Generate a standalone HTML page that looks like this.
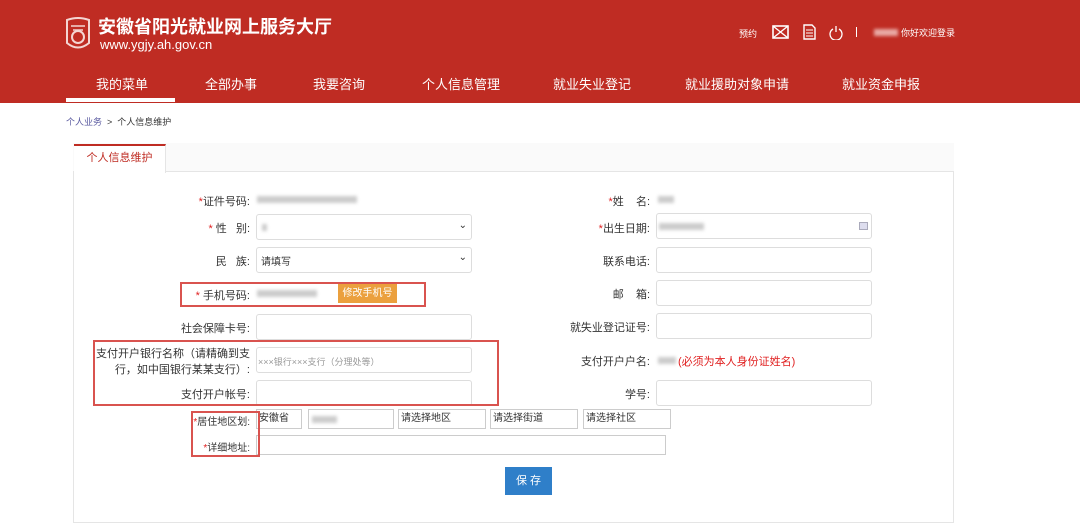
<!DOCTYPE html>
<html><head><meta charset="utf-8"><style>
*{margin:0;padding:0;box-sizing:border-box}
body{width:1080px;height:508px;overflow:hidden;background:#fff;font-family:"Liberation Sans","Noto Sans CJK SC",sans-serif;font-size:11px;color:#333;position:relative}
.a{position:absolute}
.hd{left:0;top:0;width:1080px;height:103px;background:#bf2c23}
.nav{color:#fff;font-size:13px;top:74px}
.lbl{text-align:right;white-space:nowrap}
.r{color:#e02020}
.in{border:1px solid #ddd;border-radius:3px;background:#fff;height:26px}
.sel{border:1px solid #ccc;height:20px;background:#fff;padding-left:2px;line-height:18px;font-size:10px}
.box{border:2px solid #d9534f}
.blur{background:#ccc;filter:blur(1.5px);height:7px}
</style></head><body>
<div class="a hd"></div>
<svg class="a" style="left:64px;top:16px" width="28" height="36" viewBox="0 0 28 36"><path d="M3 4 Q14 0 25 4 L25 27 Q14 36 3 27Z" fill="none" stroke="#f4d5d2" stroke-width="2"/><circle cx="14" cy="21" r="6" fill="none" stroke="#f4d5d2" stroke-width="2"/><path d="M7 10H21M9 14H19" stroke="#f4d5d2" stroke-width="1.5"/></svg>
<div class="a" style="left:98px;top:13px;color:#fff;font-size:18px;font-weight:bold">安徽省阳光就业网上服务大厅</div>
<div class="a" style="left:100px;top:37px;color:#fff;font-size:13px">www.ygjy.ah.gov.cn</div>
<div class="a" style="left:739px;top:27px;color:#fff;font-size:9px">预约</div>
<svg class="a" style="left:772px;top:25px" width="17" height="14"><rect x="1" y="1" width="15" height="12" fill="none" stroke="#fff" stroke-width="1.6"/><path d="M1 1L16 13M16 1L1 13" stroke="#fff" stroke-width="1.4"/></svg>
<svg class="a" style="left:803px;top:24px" width="13" height="16"><path d="M1 1H9L12 4V15H1Z" fill="none" stroke="#fff" stroke-width="1.4"/><path d="M3 6H10M3 9H10M3 12H10" stroke="#fff"/></svg>
<svg class="a" style="left:829px;top:25px" width="14" height="15"><path d="M4 4A6 6 0 1 0 10 4" fill="none" stroke="#fff" stroke-width="1.3"/><path d="M7 1V7" stroke="#fff" stroke-width="1.3"/></svg>
<div class="a" style="left:856px;top:27px;width:1px;height:10px;background:#fff"></div>
<div class="a blur" style="left:874px;top:29px;width:24px;background:#e9a9a4"></div>
<div class="a" style="left:901px;top:26px;color:#fff;font-size:9px">你好欢迎登录</div>
<div class="a nav" style="left:96px">我的菜单</div>
<div class="a nav" style="left:205px">全部办事</div>
<div class="a nav" style="left:313px">我要咨询</div>
<div class="a nav" style="left:422px">个人信息管理</div>
<div class="a nav" style="left:553px">就业失业登记</div>
<div class="a nav" style="left:685px">就业援助对象申请</div>
<div class="a nav" style="left:842px">就业资金申报</div>
<div class="a" style="left:66px;top:98px;width:109px;height:4px;background:#fff"></div>
<div class="a" style="left:66px;top:115px;font-size:9px"><span style="color:#5a5aa0">个人业务</span> &nbsp;&gt;&nbsp; 个人信息维护</div>
<div class="a" style="left:73px;top:143px;width:881px;height:380px;border:1px solid #e5e5e5"></div>
<div class="a" style="left:73px;top:143px;width:881px;height:29px;border-bottom:1px solid #e5e5e5;background:#fafafa"></div>
<div class="a" style="left:74px;top:144px;width:92px;height:29px;background:#fff;border-top:2px solid #bf2c23;border-right:1px solid #e5e5e5;color:#bf2c23;font-size:11px;text-align:center;line-height:25px">个人信息维护</div>

<div class="a lbl" style="right:830px;top:193px"><span class="r">*</span>证件号码:</div>
<div class="a blur" style="left:257px;top:196px;width:100px"></div>
<div class="a lbl" style="right:830px;top:220px"><span class="r">*</span> 性 &nbsp; 别:</div>
<div class="a in" style="left:256px;top:214px;width:216px"><div class="a blur" style="left:5px;top:9px;width:5px"></div><span class="a" style="right:4px;top:5px;font-size:10px">⌄</span></div>
<div class="a lbl" style="right:830px;top:253px">民 &nbsp; 族:</div>
<div class="a in" style="left:256px;top:247px;width:216px;padding:5px 4px;font-size:10px">请填写<span class="a" style="right:4px;top:4px">⌄</span></div>
<div class="a lbl" style="right:830px;top:287px"><span class="r">*</span> 手机号码:</div>
<div class="a blur" style="left:257px;top:290px;width:60px"></div>
<div class="a" style="left:338px;top:284px;width:59px;height:19px;background:#eba03e;color:#fff;font-size:10px;line-height:19px;text-align:center">修改手机号</div>
<div class="a lbl" style="right:830px;top:320px">社会保障卡号:</div>
<div class="a in" style="left:256px;top:314px;width:216px"></div>
<div class="a lbl" style="right:830px;top:346px;line-height:16px">支付开户银行名称（请精确到支<br>行，如中国银行某某支行）:</div>
<div class="a in" style="left:256px;top:347px;width:216px;padding:7px 1px;font-size:9px;color:#999">×××银行×××支行（分理处等）</div>
<div class="a lbl" style="right:830px;top:386px">支付开户帐号:</div>
<div class="a in" style="left:256px;top:380px;width:216px"></div>
<div class="a lbl" style="right:830px;top:413px;font-size:10px"><span class="r">*</span>居住地区划:</div>
<div class="a sel" style="left:256px;top:409px;width:46px">安徽省</div>
<div class="a sel" style="left:308px;top:409px;width:86px"><div class="a blur" style="left:3px;top:6px;width:25px"></div></div>
<div class="a sel" style="left:398px;top:409px;width:88px">请选择地区</div>
<div class="a sel" style="left:490px;top:409px;width:88px">请选择街道</div>
<div class="a sel" style="left:583px;top:409px;width:88px">请选择社区</div>
<div class="a lbl" style="right:830px;top:439px;font-size:10px"><span class="r">*</span>详细地址:</div>
<div class="a sel" style="left:256px;top:435px;width:410px"></div>
<div class="a" style="left:505px;top:467px;width:47px;height:28px;background:#2f7fc9;color:#fff;font-size:11px;text-align:center;line-height:28px">保 存</div>

<div class="a lbl" style="right:430px;top:193px"><span class="r">*</span>姓 &nbsp;&nbsp; 名:</div>
<div class="a blur" style="left:658px;top:196px;width:16px"></div>
<div class="a lbl" style="right:430px;top:220px"><span class="r">*</span>出生日期:</div>
<div class="a in" style="left:656px;top:213px;width:216px"><div class="a blur" style="left:2px;top:9px;width:45px"></div><div class="a" style="right:3px;top:8px;width:9px;height:8px;border:1px solid #aab;background:#dde"></div></div>
<div class="a lbl" style="right:430px;top:253px">联系电话:</div>
<div class="a in" style="left:656px;top:247px;width:216px"></div>
<div class="a lbl" style="right:430px;top:286px">邮 &nbsp;&nbsp; 箱:</div>
<div class="a in" style="left:656px;top:280px;width:216px"></div>
<div class="a lbl" style="right:430px;top:319px">就失业登记证号:</div>
<div class="a in" style="left:656px;top:313px;width:216px"></div>
<div class="a lbl" style="right:430px;top:353px">支付开户户名:</div>
<div class="a blur" style="left:658px;top:357px;width:18px"></div>
<div class="a r" style="left:678px;top:353px">(必须为本人身份证姓名)</div>
<div class="a lbl" style="right:430px;top:386px">学号:</div>
<div class="a in" style="left:656px;top:380px;width:216px"></div>

<div class="a box" style="left:180px;top:282px;width:246px;height:25px"></div>
<div class="a box" style="left:93px;top:340px;width:406px;height:66px"></div>
<div class="a box" style="left:191px;top:411px;width:69px;height:46px"></div>
</body></html>
